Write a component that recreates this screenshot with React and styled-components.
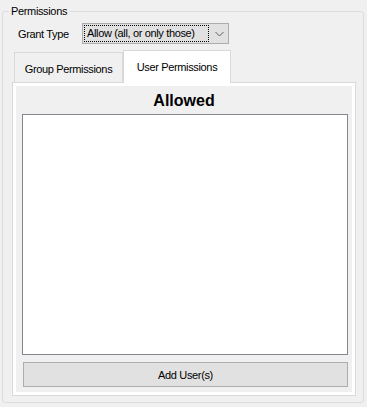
import React from 'react';
import styled, { createGlobalStyle } from 'styled-components';

const GlobalStyle = createGlobalStyle`
  html, body {
    margin: 0;
    background: #f0f0f0;
  }

  body {
    font-family: "Liberation Sans", Arial, sans-serif;
    font-size: 11px;
    letter-spacing: -0.35px;
    color: #000;
  }
`;

const GroupBox = styled.div`
  position: relative;
  box-sizing: border-box;
  width: 362px;
  height: 392px;
  margin: 11px 0 0 2px;
  border: 1px solid #dcdcdc;
  border-radius: 3px;
`;

const Legend = styled.span`
  position: absolute;
  top: -7px;
  left: 6px;
  padding: 0 2px;
  line-height: 13px;
  background: #f0f0f0;
`;

const GrantRow = styled.div`
  display: flex;
  align-items: center;
  padding: 11px 0 0 15px;
`;

const Label = styled.span`
  width: 64px;
`;

const Combo = styled.div`
  position: relative;
  box-sizing: border-box;
  display: flex;
  align-items: center;
  width: 147px;
  height: 21px;
  padding: 1px;
  border: 1px solid #adadad;
  background: #e1e1e1;
`;

const ComboValue = styled.span`
  box-sizing: border-box;
  display: flex;
  align-items: center;
  width: 125px;
  height: 17px;
  padding-left: 2px;
  border: 1px dotted #000;
  line-height: 13px;
`;

const Chevron = styled.svg`
  margin-left: 6px;
`;

const TabArea = styled.div`
  margin: 6px 0 0 9px;
  width: 344px;
`;

const TabStrip = styled.div`
  display: flex;
  align-items: flex-end;
  padding-left: 2px;
`;

const Tab = styled.div`
  position: relative;
  box-sizing: border-box;
  display: flex;
  justify-content: center;
  align-items: center;
  width: ${({ $selected }) => ($selected ? 108 : 109)}px;
  height: ${({ $selected }) => ($selected ? 33 : 30)}px;
  padding-top: ${({ $selected }) => ($selected ? 0 : 2)}px;
  margin-bottom: ${({ $selected }) => ($selected ? -1 : 0)}px;
  border: 1px solid #d9d9d9;
  border-bottom: none;
  background: ${({ $selected }) => ($selected ? '#fff' : '#f0f0f0')};
  z-index: ${({ $selected }) => ($selected ? 1 : 0)};
`;

const Panel = styled.div`
  box-sizing: border-box;
  height: 314px;
  padding: 3px;
  border: 1px solid #d9d9d9;
  background: #fff;
`;

const Page = styled.div`
  display: flex;
  flex-direction: column;
  height: 100%;
  background: #f0f0f0;
`;

const Heading = styled.div`
  box-sizing: border-box;
  height: 28px;
  padding-top: 6px;
  text-align: center;
  font-size: 16px;
  font-weight: bold;
  line-height: 18px;
  letter-spacing: 0;
`;

const ListBox = styled.div`
  box-sizing: border-box;
  height: 241px;
  margin: 0 4px 0 6px;
  border: 1px solid #828790;
  background: #fff;
`;

const Button = styled.button`
  box-sizing: border-box;
  height: 25px;
  margin: 7px 4px 0 7px;
  border: 1px solid #adadad;
  background: #e1e1e1;
  font-family: inherit;
  font-size: 11px;
  letter-spacing: -0.35px;
  color: #000;
  padding: 0;
`;

export default function App() {
  return (
    <>
      <GlobalStyle />
      <GroupBox>
        <Legend>Permissions</Legend>
        <GrantRow>
          <Label>Grant Type</Label>
          <Combo>
            <ComboValue>Allow (all, or only those)</ComboValue>
            <Chevron width="9" height="6" viewBox="0 0 9 6">
              <path d="M0.5 1 L4.5 5 L8.5 1" fill="none" stroke="#606060" strokeWidth="1" />
            </Chevron>
          </Combo>
        </GrantRow>
        <TabArea>
          <TabStrip>
            <Tab>Group Permissions</Tab>
            <Tab $selected>User Permissions</Tab>
          </TabStrip>
          <Panel>
            <Page>
              <Heading>Allowed</Heading>
              <ListBox />
              <Button>Add User(s)</Button>
            </Page>
          </Panel>
        </TabArea>
      </GroupBox>
    </>
  );
}
